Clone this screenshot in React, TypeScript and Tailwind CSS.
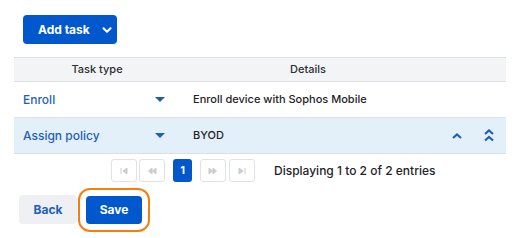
import { ChevronDown } from "lucide-react"

const blue = "text-[#1f5fb8]"

function Caret() {
  return (
    <svg width="10" height="5" viewBox="0 0 10 5" className="shrink-0">
      <path d="M0 0h10L5 5z" fill="#1f5fb8" />
    </svg>
  )
}

function Up() {
  return (
    <svg width="10" height="6" viewBox="0 0 10 6">
      <path d="M1 5l4-3.5L9 5" fill="none" stroke="#1f5fb8" strokeWidth="2.2" />
    </svg>
  )
}

function UpDouble() {
  return (
    <svg width="10" height="13" viewBox="0 0 10 13">
      <path d="M1 5l4-3.5L9 5M1 11.5l4-3.5 4 3.5" fill="none" stroke="#1f5fb8" strokeWidth="2.2" />
    </svg>
  )
}

function PageButton({ kind }: { kind: "first" | "prev" | "next" | "last" }) {
  const paths: Record<string, string> = {
    first: "M2 2v6M8 2L4 5l4 3z",
    prev: "M5 2L1.5 5 5 8zM9 2L5.5 5 9 8z",
    next: "M1 2l3.5 3L1 8zM5 2l3.5 3L5 8z",
    last: "M2 2l4 3-4 3zM8 2v6",
  }
  return (
    <div className="w-[26px] h-[23px] border border-[#dfe2e6] rounded-[3px] flex items-center justify-center bg-white">
      <svg width="10" height="10" viewBox="0 0 10 10">
        <path d={paths[kind]} fill="#c9ccd1" stroke="#c9ccd1" strokeWidth="1" />
      </svg>
    </div>
  )
}

export default function App() {
  return (
    <div className="w-[516px] h-[238px] bg-white pt-[15px] font-['Inter',sans-serif] overflow-hidden">
      <div className="pl-[23px]">
        <button className="h-[29px] w-[94px] bg-[#0058cc] rounded-[4px] text-white font-bold text-[12px] whitespace-nowrap flex items-center pl-[15px] gap-[10px]">
          Add task
          <ChevronDown size={14} strokeWidth={3.5} />
        </button>
      </div>

      <div className="ml-[14px] mt-[13px] w-[492px] grid grid-cols-[166px_256px_34px_36px]">
        <div className="col-span-4 grid grid-cols-subgrid h-[25px] bg-[#f3f4f6] border-y border-[#dcdfe3] text-[11px] font-medium text-[#2b2f33] items-center">
          <div className="text-center">Task type</div>
          <div className="text-center">Details</div>
          <div />
          <div />
        </div>

        <div className="col-span-4 grid grid-cols-subgrid h-[36px] border-b border-[#dcdfe3] items-center">
          <div className="flex items-center justify-between pl-[9px] pr-[15px]">
            <span className={`${blue} text-[12px] font-medium`}>Enroll</span>
            <Caret />
          </div>
          <div className="pl-[13px] text-[11px] font-medium text-[#1f2328]">Enroll device with Sophos Mobile</div>
          <div />
          <div />
        </div>

        <div className="col-span-4 grid grid-cols-subgrid h-[36px] bg-[#e3eff9] border-b border-[#dcdfe3] items-center">
          <div className="flex items-center justify-between pl-[9px] pr-[15px]">
            <span className={`${blue} text-[12px] font-medium`}>Assign policy</span>
            <Caret />
          </div>
          <div className="pl-[13px] text-[11px] font-medium text-[#1f2328]">BYOD</div>
          <div className="flex justify-center pl-[8px]">
            <Up />
          </div>
          <div className="flex justify-center pl-[2px]">
            <UpDouble />
          </div>
        </div>
      </div>

      <div className="flex items-center mt-[5px] pl-[111px]">
        <div className="flex gap-[2px]">
          <PageButton kind="first" />
          <PageButton kind="prev" />
        </div>
        <div className="ml-[8px] w-[19px] h-[23px] bg-[#0058cc] rounded-[3px] text-white text-[11px] font-bold flex items-center justify-center">
          1
        </div>
        <div className="ml-[8px] flex gap-[3px]">
          <PageButton kind="next" />
          <PageButton kind="last" />
        </div>
        <span className="ml-[19px] text-[12px] font-medium text-[#1f2328]">Displaying 1 to 2 of 2 entries</span>
      </div>

      <div className="flex items-center mt-[13px] pl-[19px] gap-[9px]">
        <button className="w-[58px] h-[29px] bg-[#eef0f3] rounded-[4px] text-[12px] font-bold text-[#1f5fb8]">
          Back
        </button>
        <button className="w-[56px] h-[28px] bg-[#0058cc] rounded-[4px] text-[12px] font-bold text-white outline-2 outline-[#f57f0e] outline-offset-[6px]">
          Save
        </button>
      </div>
    </div>
  )
}
